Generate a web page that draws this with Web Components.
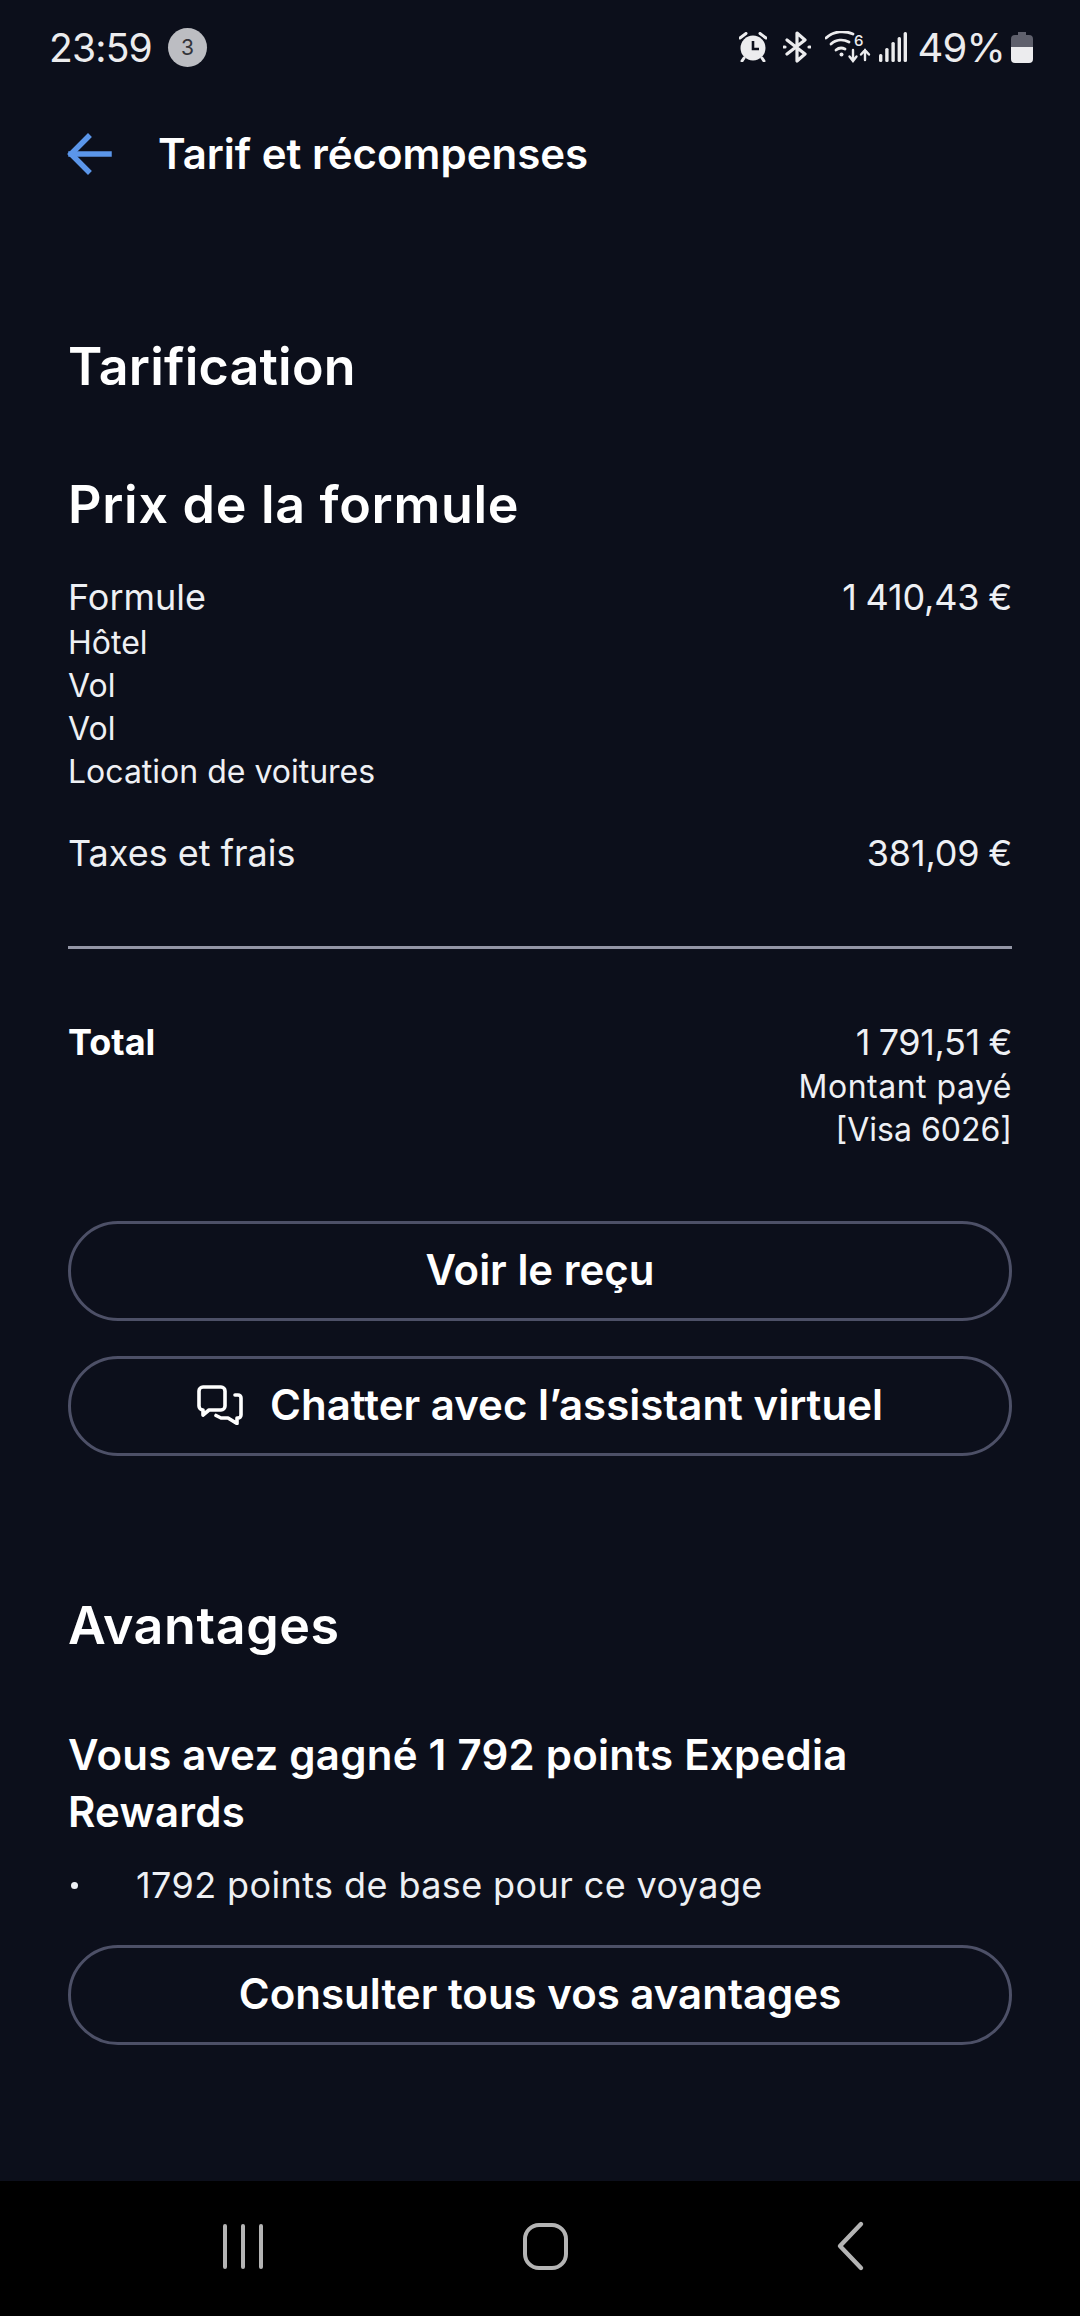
<!DOCTYPE html>
<html lang="fr">
<head>
<meta charset="utf-8">
<title>Tarif et récompenses</title>
<style>
  html, body { margin: 0; padding: 0; background: #0c0f1b; }
  body { width: 1080px; height: 2316px; font-family: Inter, "Noto Sans", sans-serif; color: #fff; overflow: hidden; }
</style>
</head>
<body>
<trip-screen>
  <status-bar slot="status"></status-bar>
  <top-bar slot="top">Tarif et récompenses</top-bar>

  <h-text level="1" style="margin-top:120px">Tarification</h-text>
  <h-text level="2" style="margin-top:76px">Prix de la formule</h-text>

  <price-row style="margin-top:38px" label="Formule" value="1 410,43 €">
    <span>Hôtel</span><span>Vol</span><span>Vol</span><span>Location de voitures</span>
  </price-row>
  <price-row style="margin-top:37px" label="Taxes et frais" value="381,09 €"></price-row>

  <div style="height:3px;background:#9496a6;margin-top:69px"></div>

  <total-row style="margin-top:70px" amount="1 791,51 €">
    <span style="letter-spacing:.5px">Montant payé</span><span>[Visa 6026]</span>
  </total-row>

  <pill-button style="margin-top:70px">Voir le reçu</pill-button>
  <pill-button style="margin-top:35px" icon="chat">Chatter avec l’assistant virtuel</pill-button>

  <h-text level="3" style="margin-top:139px">Avantages</h-text>
  <h-text level="4" style="margin-top:69px">Vous avez gagné 1 792 points Expedia Rewards</h-text>
  <bullet-item style="margin-top:22px">1792 points de base pour ce voyage</bullet-item>
  <pill-button style="margin-top:37px">Consulter tous vos avantages</pill-button>

  <nav-bar slot="nav"></nav-bar>
</trip-screen>

<script>
class TripScreen extends HTMLElement {
  constructor() {
    super();
    this.attachShadow({ mode: "open" });
    this.shadowRoot.innerHTML = `
      <style>
        :host { display: flex; flex-direction: column; width: 1080px; height: 2316px; background: #0c0f1b; }
        main { flex: 1; display: flex; flex-direction: column; padding: 0 68px; min-height: 0; }
      </style>
      <slot name="status"></slot>
      <slot name="top"></slot>
      <main><slot></slot></main>
      <slot name="nav"></slot>
    `;
  }
}

class StatusBar extends HTMLElement {
  constructor() {
    super();
    this.attachShadow({ mode: "open" });
    this.shadowRoot.innerHTML = `
      <style>
        :host { display: flex; align-items: center; height: 94px; padding: 0 47px 0 49px; font-family: Inter, Roboto, sans-serif; color: #ececee; }
        .time { font-size: 39px; font-weight: 400; letter-spacing: -0.8px; }
        .badge { width: 39px; height: 39px; margin-left: 16px; border-radius: 50%; background: #bcbdc2; color: #33343a; font-size: 21px; display: flex; align-items: center; justify-content: center; }
        .right { margin-left: auto; display: flex; align-items: center; }
        .pct { font-size: 40px; font-weight: 400; letter-spacing: -0.8px; margin-left: 10px; }
        svg { display: block; }
      </style>
      <span class="time">23:59</span>
      <span class="badge">3</span>
      <div class="right">
        <svg width="28" height="30" viewBox="0 0 28 30" fill="#ececee">
          <circle cx="14" cy="16" r="12.5"/>
          <path d="M1 6 7 1.5M27 6 21 1.5M5 26 3 29M23 26 25 29" stroke="#ececee" stroke-width="3" stroke-linecap="round"/>
          <path d="M14 9v8h6" fill="none" stroke="#0c0f1b" stroke-width="2.6"/>
        </svg>
        <svg style="margin-left:16px" width="28" height="32" viewBox="0 0 28 32" fill="none" stroke="#ececee" stroke-width="3.2" stroke-linejoin="round" stroke-linecap="round">
          <path d="M4 9 22 23 14 30V2l8 7L4 23"/>
          <path d="M1 16h1M26 16h1"/>
        </svg>
        <svg style="margin-left:14px" width="46" height="32" viewBox="0 0 46 32" fill="none" stroke="#ececee" stroke-width="2.8" stroke-linecap="round">
          <path d="M1 7C9-.5 20-.5 28 3"/>
          <path d="M6 13C11 8.5 18 8 24 11"/>
          <path d="M11 19c3-2.500 6-2.500 9-1"/>
          <circle cx="16.500" cy="23.500" r="2" fill="#ececee" stroke="none"/>
          <path d="M28 19v10m-3.500-3.500L28 30l3.500-4.500M40 29V19m-4 4.500L40 19l4 4.500" stroke-width="2.400"/>
          <text x="29" y="15" font-family="Inter, sans-serif" font-size="15" font-weight="500" fill="#ececee" stroke="none">6</text>
        </svg>
        <svg style="margin-left:8px" width="28" height="30" viewBox="0 0 28 30" fill="#ececee">
          <rect x="0" y="22" width="3.400" height="8" rx="1.500"/>
          <rect x="6.200" y="16" width="3.400" height="14" rx="1.500"/>
          <rect x="12.400" y="10" width="3.400" height="20" rx="1.500"/>
          <rect x="18.600" y="5" width="3.400" height="25" rx="1.500"/>
          <rect x="24.600" y="0" width="3.400" height="30" rx="1.500"/>
        </svg>
        <span class="pct">49%</span>
        <svg style="margin-left:6px" width="22" height="31" viewBox="0 0 22 31">
          <path d="M7 0h8v3h3a4 4 0 0 1 4 4v8H0V7a4 4 0 0 1 4-4h3z" fill="#5f606c"/>
          <path d="M0 19h22v8a4 4 0 0 1-4 4H4a4 4 0 0 1-4-4z" fill="#ececee"/>
          <rect y="15" width="22" height="4" fill="#ececee"/>
        </svg>
      </div>
    `;
  }
}

class TopBar extends HTMLElement {
  constructor() {
    super();
    this.attachShadow({ mode: "open" });
    this.shadowRoot.innerHTML = `
      <style>
        :host { display: flex; align-items: center; box-sizing: border-box; height: 122px; padding: 0 0 3px 66px; font-size: 42px; font-weight: 600; color: #fff; }
        svg { display: block; margin-right: 46px; }
      </style>
      <svg width="46" height="42" viewBox="0 0 46 42" fill="none" stroke="#5b96ea" stroke-width="5.5" stroke-linecap="square">
        <path d="M43 21H5"/>
        <path d="M22 4 5 21l17 17"/>
      </svg>
      <slot></slot>
    `;
  }
}

class HText extends HTMLElement {
  constructor() {
    super();
    this.attachShadow({ mode: "open" });
    const level = this.getAttribute("level");
    const sizes = { 1: [52, 62, 0.2], 2: [52, 62, 0.7], 3: [52, 62, 0.6], 4: [42, 57, 0.25] };
    const [size, line, track] = sizes[level];
    this.shadowRoot.innerHTML = `
      <style>
        :host { display: block; font-size: ${size}px; line-height: ${line}px; letter-spacing: ${track}px; font-weight: 600; color: #fff; }
      </style>
      <slot></slot>
    `;
  }
}

class PriceRow extends HTMLElement {
  constructor() {
    super();
    this.attachShadow({ mode: "open" });
    this.shadowRoot.innerHTML = `
      <style>
        :host { display: block; color: #eef0f4; }
        .top { display: flex; justify-content: space-between; font-size: 36px; line-height: 46px; }
        .value { word-spacing: -1px; letter-spacing: -0.2px; }
        .sub { display: flex; flex-direction: column; margin-top: 1px; font-size: 32px; line-height: 43px; }
        ::slotted(span) { display: block; }
      </style>
      <div class="top"><span>${this.getAttribute("label")}</span><span class="value">${this.getAttribute("value")}</span></div>
      <div class="sub"><slot></slot></div>
    `;
  }
}

class TotalRow extends HTMLElement {
  constructor() {
    super();
    this.attachShadow({ mode: "open" });
    this.shadowRoot.innerHTML = `
      <style>
        :host { display: flex; justify-content: space-between; color: #eef0f4; }
        b { font-size: 36px; line-height: 46px; font-weight: 700; color: #fff; }
        .right { display: flex; flex-direction: column; align-items: flex-end; font-size: 32px; line-height: 43px; }
        .amount { font-size: 36px; line-height: 46px; word-spacing: -1px; letter-spacing: -0.4px; }
        ::slotted(span) { display: block; text-align: right; }
      </style>
      <b>Total</b>
      <div class="right"><span class="amount">${this.getAttribute("amount")}</span><slot></slot></div>
    `;
  }
}

class PillButton extends HTMLElement {
  constructor() {
    super();
    this.attachShadow({ mode: "open" });
    const chat = this.getAttribute("icon") === "chat" ? `
      <svg width="46" height="40" viewBox="0 0 46 40" fill="none" stroke="#fff" stroke-width="3.600" stroke-linejoin="round" stroke-linecap="round">
        <path d="M6 2h18a4 4 0 0 1 4 4v15a4 4 0 0 1-4 4H12l-6 5v-5a4 4 0 0 1-4-4V6a4 4 0 0 1 4-4z"/>
        <path d="M19 30.500l5 2.500h7l9 5.500V33h1a3 3 0 0 0 3-3V13a3 3 0 0 0-3-3h-3"/>
      </svg>` : "";
    this.shadowRoot.innerHTML = `
      <style>
        :host { display: flex; align-items: center; justify-content: center; gap: 27px; box-sizing: border-box; height: 100px; padding-bottom: 3px; border: 3px solid #4d5067; border-radius: 50px; font-size: 42px; font-weight: 600; color: #fff; }
        svg { display: block; }
      </style>
      ${chat}<slot></slot>
    `;
  }
}

class BulletItem extends HTMLElement {
  constructor() {
    super();
    this.attachShadow({ mode: "open" });
    this.shadowRoot.innerHTML = `
      <style>
        :host { display: flex; align-items: center; font-size: 36px; line-height: 46px; letter-spacing: 0.4px; color: #eef0f4; }
        i { width: 7px; height: 7px; border-radius: 50%; background: #eef0f4; margin: 0 58px 0 3px; }
      </style>
      <i></i><slot></slot>
    `;
  }
}

class NavBar extends HTMLElement {
  constructor() {
    super();
    this.attachShadow({ mode: "open" });
    this.shadowRoot.innerHTML = `
      <style>
        :host { display: block; height: 135px; background: #000; }
        svg { display: block; }
      </style>
      <svg width="1080" height="135" viewBox="0 0 1080 135" fill="none" stroke="#b4b4b4" stroke-width="4" stroke-linecap="round" stroke-linejoin="round">
        <path d="M225 45v41M243 45v41M261 45v41"/>
        <rect x="525" y="44" width="41" height="43" rx="14"/>
        <path d="M861 44 840 66l21 22" stroke-width="4.400" transform="translate(0 -1)"/>
      </svg>
    `;
  }
}

customElements.define("trip-screen", TripScreen);
customElements.define("status-bar", StatusBar);
customElements.define("top-bar", TopBar);
customElements.define("h-text", HText);
customElements.define("price-row", PriceRow);
customElements.define("total-row", TotalRow);
customElements.define("pill-button", PillButton);
customElements.define("bullet-item", BulletItem);
customElements.define("nav-bar", NavBar);
</script>
</body>
</html>
